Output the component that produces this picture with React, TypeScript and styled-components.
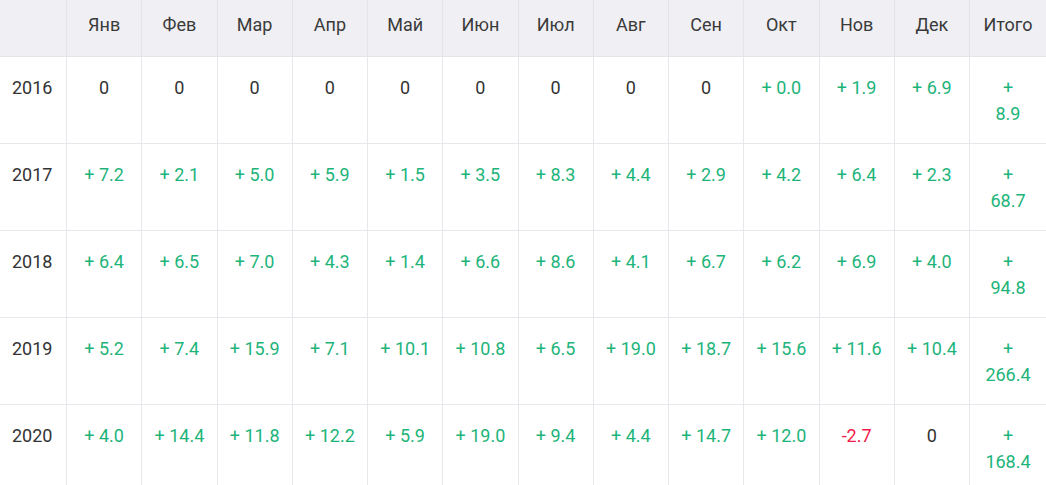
import React from 'react';
import styled, {createGlobalStyle} from 'styled-components';

type Value = number | null;

interface YearRow {
    year: number;
    months: Value[];
    total: number;
}

const monthNames = ['Янв', 'Фев', 'Мар', 'Апр', 'Май', 'Июн', 'Июл', 'Авг', 'Сен', 'Окт', 'Нов', 'Дек'];

const yearsData: YearRow[] = [
    {year: 2016, months: [null, null, null, null, null, null, null, null, null, 0.0, 1.9, 6.9], total: 8.9},
    {year: 2017, months: [7.2, 2.1, 5.0, 5.9, 1.5, 3.5, 8.3, 4.4, 2.9, 4.2, 6.4, 2.3], total: 68.7},
    {year: 2018, months: [6.4, 6.5, 7.0, 4.3, 1.4, 6.6, 8.6, 4.1, 6.7, 6.2, 6.9, 4.0], total: 94.8},
    {year: 2019, months: [5.2, 7.4, 15.9, 7.1, 10.1, 10.8, 6.5, 19.0, 18.7, 15.6, 11.6, 10.4], total: 266.4},
    {year: 2020, months: [4.0, 14.4, 11.8, 12.2, 5.9, 19.0, 9.4, 4.4, 14.7, 12.0, -2.7, null], total: 168.4}
];

const tone = (v: Value) => (v === null ? 'neutral' : v < 0 ? 'negative' : 'positive');

const format = (v: Value) => {
    if (v === null) return '0';
    if (v < 0) return v.toFixed(1);
    return `+ ${v.toFixed(1)}`;
};

const App = () => {
    return (
        <>
            <GlobalStyle />
            <Table>
                <HeadCell $first />
                {monthNames.map(name => (
                    <HeadCell key={name}>{name}</HeadCell>
                ))}
                <HeadCell>Итого</HeadCell>
                {yearsData.map(row => (
                    <React.Fragment key={row.year}>
                        <Cell $first>{row.year}</Cell>
                        {row.months.map((v, i) => (
                            <Cell key={i} $tone={tone(v)}>
                                {format(v)}
                            </Cell>
                        ))}
                        <Cell $tone='positive'>
                            <Line>+</Line>
                            <Line>{row.total.toFixed(1)}</Line>
                        </Cell>
                    </React.Fragment>
                ))}
            </Table>
        </>
    );
};

export default App;

const GlobalStyle = createGlobalStyle`
    body {
        margin: 0;
        background: #ffffff;
        font-family: Roboto, 'Noto Sans', sans-serif;
    }
`;

const Table = styled.div`
    display: grid;
    width: 1046px;
    grid-template-columns: 66px repeat(12, 75.25px) 1fr;
    font-size: 18px;
    line-height: 26px;
    color: #333333;
`;

const HeadCell = styled.div<{$first?: boolean}>`
    padding: 12px 2px 18px;
    background: #efeff4;
    border-left: ${p => (p.$first ? 'none' : '1px solid #e4e4e9')};
    border-bottom: 1px solid #e4e4e9;
    text-align: center;
    color: #3a3a3a;
`;

const colors = {
    neutral: '#333333',
    positive: '#1db47a',
    negative: '#f31a4b'
};

const Cell = styled.div<{$first?: boolean; $tone?: keyof typeof colors}>`
    padding: 18px ${p => (p.$first ? '0 16px 12px' : '2px 16px')};
    border-left: ${p => (p.$first ? 'none' : '1px solid #e8e8ec')};
    border-bottom: 1px solid #e8e8ec;
    text-align: ${p => (p.$first ? 'left' : 'center')};
    color: ${p => colors[p.$tone ?? 'neutral']};
    white-space: nowrap;
`;

const Line = styled.div`
    display: block;
`;
